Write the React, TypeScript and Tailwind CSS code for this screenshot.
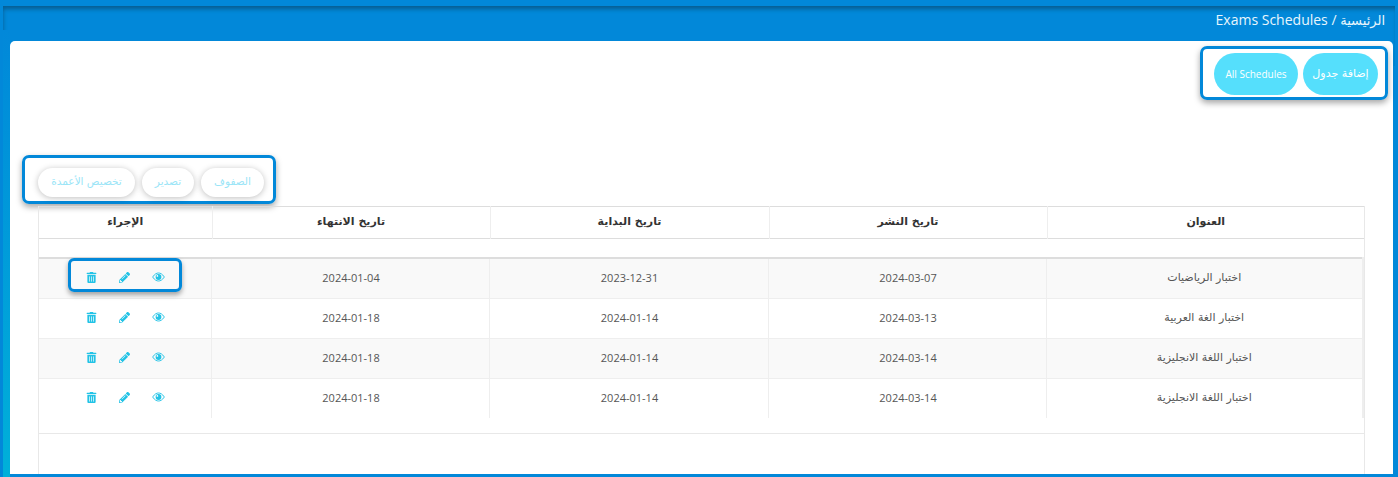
import { FaPencilAlt, FaTrashAlt } from "react-icons/fa";

const arabic = "font-['DejaVu_Sans',sans-serif]";

const rows = [
  { title: "اختبار الرياضيات", published: "2024-03-07", start: "2023-12-31", end: "2024-01-04" },
  { title: "اختبار الغة العربية", published: "2024-03-13", start: "2024-01-14", end: "2024-01-18" },
  { title: "اختبار اللغة الانجليزية", published: "2024-03-14", start: "2024-01-14", end: "2024-01-18" },
  { title: "اختبار اللغة الانجليزية", published: "2024-03-14", start: "2024-01-14", end: "2024-01-18" },
];

const headers = ["العنوان", "تاريخ النشر", "تاريخ البداية", "تاريخ الانتهاء", "الإجراء"];

function EyeIcon() {
  return (
    <svg viewBox="0 0 14 10" className="h-[10px] w-[13px]">
      <path
        d="M0.7 5C3 1.6 5 .7 7 .7s4 .9 6.3 4.3C11 8.4 9 9.3 7 9.3S3 8.4.7 5Z"
        fill="none"
        stroke="currentColor"
        strokeWidth="1"
      />
      <circle cx="7" cy="5" r="3.1" fill="currentColor" />
      <circle cx="5.8" cy="3.8" r="0.9" fill="#ffffff" />
    </svg>
  );
}

function Actions() {
  return (
    <div className="flex items-center justify-center gap-[22px] pl-[2px] text-[#22c3e6]">
      <EyeIcon />
      <FaPencilAlt className="text-[11px]" />
      <FaTrashAlt className="text-[11px]" />
    </div>
  );
}

export default function App() {
  return (
    <div
      dir="rtl"
      className="relative flex h-[477px] w-[1398px] flex-col overflow-hidden bg-[#0288d9] font-['Open_Sans',sans-serif]"
    >
      {/* soft inner frame of the page behind the card */}
      <div className="pointer-events-none absolute inset-x-[3px] top-[6px] h-[60px] shadow-[inset_1px_4px_4px_-1px_#075d91]" />
      <div className="pointer-events-none absolute bottom-0 left-[3px] top-[30px] w-[7px] bg-gradient-to-b from-[#0288d9] to-[#00b0d9]" />

      {/* header band */}
      <div className="relative flex h-[41px] shrink-0 items-end pb-[12px] pr-[13px]">
        <span className="text-[14px] leading-[16px] text-[#e8f6fd]">
          <span className={`${arabic} text-[13px]`}>الرئيسية</span> / Exams Schedules
        </span>
      </div>

      <div className="relative mb-[3px] ml-[10px] mr-[5px] flex min-h-0 flex-1 flex-col rounded-t-[5px] bg-white px-[28px] pt-[5px]">
        <div className="-mr-[23px] flex h-[54px] w-[188px] shrink-0 items-center justify-center gap-[5px] rounded-[7px] border-[3px] border-[#0288d9] pl-[4px] pt-[2px] shadow-[0_3px_6px_rgba(0,0,0,0.35)]">
          <button className={`h-[42px] w-[75px] rounded-full bg-[#55dffc] text-[11px] text-white ${arabic}`}>إضافة جدول</button>
          <button className="h-[42px] w-[84px] rounded-full bg-[#55dffc] text-[10px] font-medium text-white">All Schedules</button>
        </div>

        <div className="-ml-[16px] mt-[55px] flex h-[49px] w-[254px] shrink-0 items-center gap-[7px] self-end rounded-[7px] border-[3px] border-[#0288d9] pr-[9px] pt-[5px] shadow-[0_3px_6px_rgba(0,0,0,0.35)]">
          {["الصفوف", "تصدير", "تخصيص الأعمدة"].map((label, i) => (
            <button
              key={label}
              className={`h-[29px] rounded-full bg-white text-[10.5px] text-[#9be5f7] shadow-[0_1px_6px_rgba(0,0,0,0.25)] ${arabic} ${
                i === 0 ? "w-[63px]" : i === 1 ? "w-[52px]" : "w-[97px]"
              }`}
            >
              {label}
            </button>
          ))}
        </div>

        {/* table area */}
        <div className="mt-[2px] min-h-0 flex-1 border-x border-[#e8e8e8]">
          <table className="w-full table-fixed border-collapse border-y border-[#dddddd] text-[11px]">
            <colgroup>
              <col className="w-[317px]" />
              <col className="w-[278px]" />
              <col className="w-[279px]" />
              <col className="w-[278px]" />
              <col />
            </colgroup>
            <thead>
              <tr className="h-[32px]">
                {headers.map((h) => (
                  <th key={h} className={`border-l border-[#eeeeee] text-center font-bold text-[#333333] last:border-l-0 ${arabic}`}>
                    {h}
                  </th>
                ))}
              </tr>
            </thead>
          </table>

          <div className="mt-[18px]">
            <table className="w-full table-fixed border-collapse border-t-2 border-[#dddddd] text-[11px] text-[#555555]">
              <colgroup>
                <col className="w-[317px]" />
                <col className="w-[278px]" />
                <col className="w-[279px]" />
                <col className="w-[278px]" />
                <col />
              </colgroup>
              <tbody>
                {rows.map((row, i) => (
                  <tr key={i} className={`h-[40px] border-b border-[#eeeeee] last:border-b-0 ${i % 2 === 0 ? "bg-[#f9f9f9]" : "bg-white"}`}>
                    <td className={`border-l border-r-2 border-[#eeeeee] text-center ${arabic}`}>{row.title}</td>
                    <td className="border-l border-[#eeeeee] pl-[2px] text-center">{row.published}</td>
                    <td className="border-l border-[#eeeeee] pl-[2px] text-center">{row.start}</td>
                    <td className="border-l border-[#eeeeee] pl-[2px] text-center">{row.end}</td>
                    <td className="relative pb-[2px]">
                      <Actions />
                      {i === 0 && (
                        <div className="absolute left-[29px] right-[29px] top-[-1px] h-[34px] rounded-[6px] border-[3px] border-[#0288d9] shadow-[0_3px_5px_rgba(0,0,0,0.35)]" />
                      )}
                    </td>
                  </tr>
                ))}
              </tbody>
            </table>
            <div className="h-[16px] border-b border-[#e8e8e8]" />
          </div>
        </div>
      </div>
    </div>
  );
}
